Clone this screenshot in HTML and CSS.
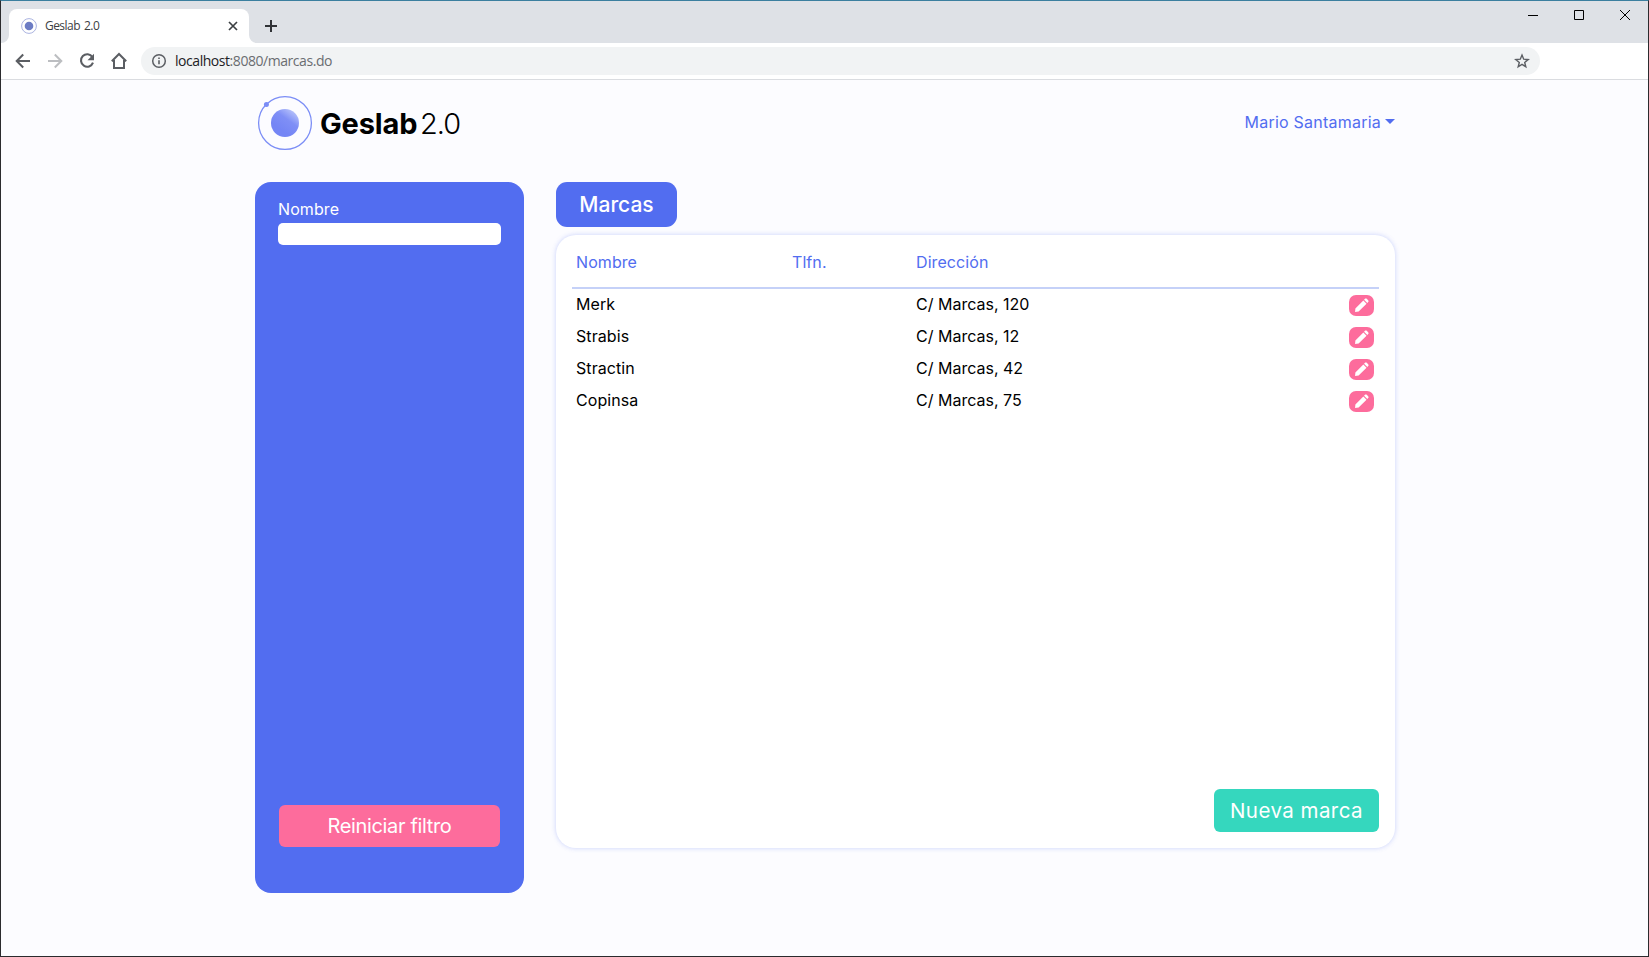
FILE: index.html
```
<!DOCTYPE html>
<html lang="es">
<head>
<meta charset="utf-8">
<title>Geslab 2.0</title>
<link rel="stylesheet" href="styles.css">
</head>
<body>
<div class="window">
  <div class="tabstrip">
    <div class="tab">
      <svg class="favicon" width="16" height="16" viewBox="0 0 16 16"><circle cx="8" cy="8" r="7.4" fill="none" stroke="#aab3e0" stroke-width="1"/><circle cx="8" cy="8" r="4.3" fill="#6c7cc4"/></svg>
      <span class="tab-title">Geslab 2.0</span>
      <svg class="tab-close" width="10" height="10" viewBox="0 0 10 10"><path d="M1 1l8 8M9 1l-8 8" stroke="#3c4043" stroke-width="1.7"/></svg>
      <svg class="curve curve-left" width="8" height="8" viewBox="0 0 8 8"><path d="M8 0v8H0a8 8 0 0 0 8-8z" fill="#fff"/></svg>
      <svg class="curve curve-right" width="8" height="8" viewBox="0 0 8 8"><path d="M0 0v8h8a8 8 0 0 1-8-8z" fill="#fff"/></svg>
    </div>
    <svg class="new-tab" width="12" height="12" viewBox="0 0 12 12"><path d="M6 0v12M0 6h12" stroke="#303236" stroke-width="2"/></svg>
    <div class="controls">
      <svg width="10" height="10" viewBox="0 0 10 10"><path d="M0 5.5h10" stroke="#000"/></svg>
      <svg width="10" height="10" viewBox="0 0 10 10"><path d="M.5.5h9v9h-9z" fill="none" stroke="#000"/></svg>
      <svg width="10" height="10" viewBox="0 0 10 10"><path d="M0 0l10 10M10 0L0 10" stroke="#000"/></svg>
    </div>
  </div>
  <div class="toolbar">
    <svg width="24" height="24" viewBox="0 0 24 24"><path d="M19 12H6M12.2 5.5L5.7 12l6.500 6.500" fill="none" stroke="#5b5e63" stroke-width="2"/></svg>
    <svg width="24" height="24" viewBox="0 0 24 24"><path d="M5 12h13M11.800 5.500l6.500 6.500-6.500 6.500" fill="none" stroke="#bcbec1" stroke-width="2"/></svg>
    <svg width="24" height="24" viewBox="0 0 24 24"><path d="M17.400 8.100A6.200 6.200 0 1 0 18 13.700" fill="none" stroke="#5b5e63" stroke-width="2.100"/><path d="M19 4.800v6.500h-6.500z" fill="#5b5e63"/></svg>
    <svg width="24" height="24" viewBox="0 0 24 24"><path d="M4.800 12.200L12 5l7.200 7.200M7 11v8h10v-8" fill="none" stroke="#5b5e63" stroke-width="2"/></svg>
    <div class="omnibox">
      <svg class="info" width="16" height="16" viewBox="0 0 16 16"><circle cx="8" cy="8" r="6.300" fill="none" stroke="#5b5e63" stroke-width="1.500"/><path d="M8 7.200v4M8 4.400v1.600" stroke="#5b5e63" stroke-width="1.600"/></svg>
      <span class="url"><b>localhost</b>:8080/marcas.do</span>
      <svg class="star" width="16" height="16" viewBox="0 0 16 16"><path d="M8 2l1.700 4.200 4.500.3-3.500 2.900 1.100 4.400L8 11.400l-3.800 2.400 1.100-4.400L1.800 6.500l4.500-.3z" fill="none" stroke="#5b5e63" stroke-width="1.400"/></svg>
    </div>
  </div>
  <div class="page">
    <header class="header">
      <div class="brand">
        <svg class="logo" width="56" height="56" viewBox="0 0 56 56">
          <defs><linearGradient id="planet" x1=".3" y1=".7" x2=".8" y2="0"><stop offset="0" stop-color="#7485f5"/><stop offset=".5" stop-color="#7f8ff6"/><stop offset="1" stop-color="#bdc8fb"/></linearGradient></defs>
          <circle cx="28" cy="28" r="26.400" fill="none" stroke="#7b8df6" stroke-width="1.300"/>
          <circle cx="28" cy="28" r="14" fill="url(#planet)"/>
          <circle cx="9.400" cy="9.500" r="2.500" fill="#7b8df6"/>
        </svg>
        <span class="brand-name">Geslab</span><span class="brand-version">2.0</span>
      </div>
      <div class="user"><span class="user-name">Mario Santamaria</span><i class="caret"></i></div>
    </header>
    <div class="columns">
      <aside class="sidebar">
        <label class="label" for="nombre">Nombre</label>
        <input class="field" id="nombre" type="text">
        <button class="reset">Reiniciar filtro</button>
      </aside>
      <main class="main">
        <h1 class="title">Marcas</h1>
        <section class="card">
          <div class="row head"><span>Nombre</span><span>Tlfn.</span><span>Dirección</span></div>
          <div class="row"><span>Merk</span><span></span><span class="addr">C/ Marcas, 120</span><button class="edit"><svg width="15" height="15" viewBox="0 0 14 14"><path d="M8.700 2.300l3 3L4.300 12.700 1 13l.3-3.300zM9.400 1.600l.8-.8c.5-.5 1.200-.5 1.700 0l1.300 1.300c.5.500.5 1.200 0 1.700l-.8.8z" fill="#fff"/></svg></button></div>
          <div class="row"><span>Strabis</span><span></span><span class="addr">C/ Marcas, 12</span><button class="edit"><svg width="15" height="15" viewBox="0 0 14 14"><path d="M8.700 2.300l3 3L4.300 12.700 1 13l.3-3.300zM9.400 1.600l.8-.8c.5-.5 1.200-.5 1.700 0l1.300 1.300c.5.500.5 1.200 0 1.700l-.8.8z" fill="#fff"/></svg></button></div>
          <div class="row"><span>Stractin</span><span></span><span class="addr">C/ Marcas, 42</span><button class="edit"><svg width="15" height="15" viewBox="0 0 14 14"><path d="M8.700 2.300l3 3L4.300 12.700 1 13l.3-3.300zM9.400 1.600l.8-.8c.5-.5 1.200-.5 1.700 0l1.300 1.300c.5.500.5 1.200 0 1.700l-.8.8z" fill="#fff"/></svg></button></div>
          <div class="row"><span>Copinsa</span><span></span><span class="addr">C/ Marcas, 75</span><button class="edit"><svg width="15" height="15" viewBox="0 0 14 14"><path d="M8.700 2.300l3 3L4.300 12.700 1 13l.3-3.300zM9.400 1.600l.8-.8c.5-.5 1.200-.5 1.700 0l1.300 1.300c.5.500.5 1.200 0 1.700l-.8.8z" fill="#fff"/></svg></button></div>
          <button class="create">Nueva marca</button>
        </section>
      </main>
    </div>
  </div>
</div>
</body>
</html>
```
FILE: styles.css
```
* { box-sizing: border-box; }
body { margin: 0; font-family: Inter, "Liberation Sans", sans-serif; font-size: 16px; color: #000; }
svg { display: block; flex: none; }
button { border: 0; padding: 0; font: inherit; color: #fff; white-space: nowrap; }
.window { width: 1649px; height: 957px; display: flex; flex-direction: column; border: 1px solid #2b2b2e; border-top-color: #3b7f9f; background: #fcfcff; overflow: hidden; }

.tabstrip { height: 42px; flex: none; display: flex; background: #dee1e6; }
.tab { position: relative; margin: 8px 0 0 8px; width: 240px; height: 34px; display: flex; align-items: center; padding: 0 11px 0 12px; background: #fff; border-radius: 8px 8px 0 0; font-family: "Open Sans", "Noto Sans", sans-serif; font-size: 12px; color: #3c4043; }
.tab-title { margin-left: 8px; letter-spacing: -0.55px; word-spacing: 1.5px; line-height: 16px; padding-bottom: 1px; }
.tab-close { margin-left: auto; }
.curve { position: absolute; bottom: 0; }
.curve-left { left: -8px; }
.curve-right { right: -8px; }
.new-tab { margin: 19px 0 0 16px; }
.controls { margin: 9px 18px 0 auto; display: flex; gap: 36px; }

.toolbar { height: 37px; flex: none; display: flex; align-items: center; gap: 8px; padding: 0 108px 0 10px; background: #fff; border-bottom: 1px solid #dadce0; }
.omnibox { flex: 1; height: 28px; margin-left: 2px; display: flex; align-items: center; padding: 0 10px; background: #f1f3f4; border-radius: 14px; }
.url { margin-left: 8px; font-family: "Open Sans", "Noto Sans", sans-serif; font-size: 14px; line-height: 20px; letter-spacing: -0.45px; color: #6a6d71; }
.url b { font-weight: 400; color: #202124; }
.star { margin-left: auto; }

.page { width: 1140px; margin-left: 254px; display: flex; flex-direction: column; }
.header { height: 102px; display: flex; justify-content: space-between; padding-top: 15px; }
.brand { display: flex; height: 57px; align-items: center; padding-left: 2px; line-height: 57px; }
.logo { align-self: flex-start; }
.brand-name { margin-left: 7px; width: 100px; font-size: 29px; font-weight: 700; letter-spacing: -0.15px; }
.brand-version { font-size: 29px; font-weight: 350; letter-spacing: -1px; }
.user { display: flex; height: 54px; align-items: center; gap: 4px; color: #526df0; letter-spacing: 0.23px; }
.caret { border: 5px solid transparent; border-top-color: #526df0; border-bottom: 0; margin-bottom: 2px; }

.columns { display: flex; gap: 32px; }
.sidebar { width: 269px; height: 711px; display: flex; flex-direction: column; padding: 17px 23px 46px; background: #526df0; border-radius: 16px; }
.label { line-height: 21px; color: #fff; letter-spacing: 0.1px; }
.field { width: 223px; height: 22px; margin-top: 3px; border: 0; border-radius: 5px; background: #fff; }
.reset { width: 221px; height: 42px; margin: auto 0 0 1px; border-radius: 6px; background: #fd6c9c; font-size: 20px; letter-spacing: -0.35px; }

.main { width: 839px; display: flex; flex-direction: column; align-items: flex-start; }
.title { margin: 0 0 8px; width: 121px; height: 45px; border-radius: 11px; background: #526df0; color: #fff; font-size: 21px; font-weight: 500; line-height: 45px; text-align: center; }
.card { width: 839px; height: 613px; display: flex; flex-direction: column; padding: 0 16px 16px; background: #fff; border-radius: 20px; box-shadow: 0 0 5px rgba(81, 110, 239, 0.3); }
.row { display: grid; grid-template-columns: 216px 124px 1fr 25px; align-items: start; height: 32px; padding: 5px 5px 0 4px; line-height: 20px; letter-spacing: 0.08px; }
.addr { letter-spacing: 0; }
.head { height: 54px; padding-top: 17px; border-bottom: 2px solid #c5d1f8; color: #526df0; }
.edit { display: grid; place-items: center; width: 25px; height: 21px; margin-top: 1px; border-radius: 7px; background: #fd6c9c; }
.create { width: 165px; height: 43px; margin: auto 0 0 auto; border-radius: 6px; background: #35d7be; font-size: 20.5px; letter-spacing: 0.45px; }
```
